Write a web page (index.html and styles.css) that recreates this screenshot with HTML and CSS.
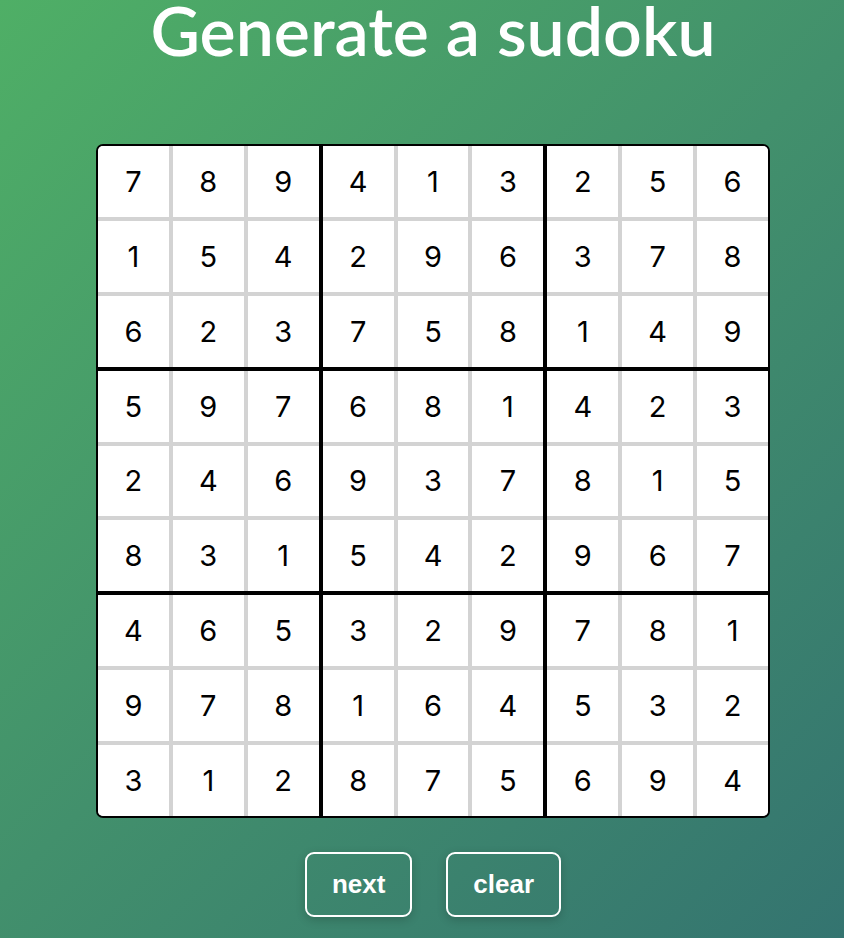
FILE: index.html
```html
<!DOCTYPE html>
<html lang="en">
<head>
<meta charset="utf-8">
<title>Generate a sudoku</title>
<link rel="stylesheet" href="styles.css">
</head>
<body>
<main class="page">
  <h1 class="title">Generate a sudoku</h1>
  <div class="board">
    <div class="box"><div class="cell">7</div><div class="cell">8</div><div class="cell">9</div><div class="cell">1</div><div class="cell">5</div><div class="cell">4</div><div class="cell">6</div><div class="cell">2</div><div class="cell">3</div></div>
    <div class="box"><div class="cell">4</div><div class="cell">1</div><div class="cell">3</div><div class="cell">2</div><div class="cell">9</div><div class="cell">6</div><div class="cell">7</div><div class="cell">5</div><div class="cell">8</div></div>
    <div class="box"><div class="cell">2</div><div class="cell">5</div><div class="cell">6</div><div class="cell">3</div><div class="cell">7</div><div class="cell">8</div><div class="cell">1</div><div class="cell">4</div><div class="cell">9</div></div>
    <div class="box"><div class="cell">5</div><div class="cell">9</div><div class="cell">7</div><div class="cell">2</div><div class="cell">4</div><div class="cell">6</div><div class="cell">8</div><div class="cell">3</div><div class="cell">1</div></div>
    <div class="box"><div class="cell">6</div><div class="cell">8</div><div class="cell">1</div><div class="cell">9</div><div class="cell">3</div><div class="cell">7</div><div class="cell">5</div><div class="cell">4</div><div class="cell">2</div></div>
    <div class="box"><div class="cell">4</div><div class="cell">2</div><div class="cell">3</div><div class="cell">8</div><div class="cell">1</div><div class="cell">5</div><div class="cell">9</div><div class="cell">6</div><div class="cell">7</div></div>
    <div class="box"><div class="cell">4</div><div class="cell">6</div><div class="cell">5</div><div class="cell">9</div><div class="cell">7</div><div class="cell">8</div><div class="cell">3</div><div class="cell">1</div><div class="cell">2</div></div>
    <div class="box"><div class="cell">3</div><div class="cell">2</div><div class="cell">9</div><div class="cell">1</div><div class="cell">6</div><div class="cell">4</div><div class="cell">8</div><div class="cell">7</div><div class="cell">5</div></div>
    <div class="box"><div class="cell">7</div><div class="cell">8</div><div class="cell">1</div><div class="cell">5</div><div class="cell">3</div><div class="cell">2</div><div class="cell">6</div><div class="cell">9</div><div class="cell">4</div></div>
  </div>
  <div class="actions">
    <button class="btn" type="button">next</button>
    <button class="btn btn-clear" type="button">clear</button>
  </div>
</main>
</body>
</html>
```
FILE: styles.css
```css
html, body {
  margin: 0;
  height: 100%;
}

body {
  background: linear-gradient(135deg, #4faf66 0%, #42906c 50%, #347470 100%);
  font-family: "Lato", "Liberation Sans", sans-serif;
  overflow: hidden;
}

.page {
  display: flex;
  flex-direction: column;
  align-items: center;
  padding-left: 22px;
}

.title {
  margin: -10px 0 0;
  font-size: 68px;
  line-height: 80px;
  font-weight: 600;
  color: #ffffff;
}

.board {
  margin-top: 74px;
  box-sizing: border-box;
  width: 674px;
  height: 674px;
  border: 2px solid #000;
  border-radius: 7px;
  background: #000;
  overflow: hidden;
  display: grid;
  grid-template-columns: repeat(3, 1fr);
  grid-template-rows: repeat(3, 1fr);
  gap: 4px;
}

.box {
  display: grid;
  grid-template-columns: repeat(3, 1fr);
  grid-template-rows: repeat(3, 1fr);
  gap: 4px;
  background: #d3d3d3;
}

.cell {
  background: #fff;
  display: flex;
  align-items: center;
  justify-content: center;
  font-family: "Inter", "Lato", sans-serif;
  font-size: 29px;
  font-weight: 400;
  color: #000;
}

.actions {
  display: flex;
  gap: 34px;
  margin-top: 34px;
}

.btn {
  height: 65px;
  padding: 0 25px;
  border: 2px solid #fff;
  border-radius: 9px;
  background: transparent;
  color: #fff;
  font-family: "Liberation Sans", Arial, sans-serif;
  font-weight: 700;
  font-size: 26px;
  box-shadow: 0 3px 10px rgba(0, 0, 0, 0.18);
}
```
